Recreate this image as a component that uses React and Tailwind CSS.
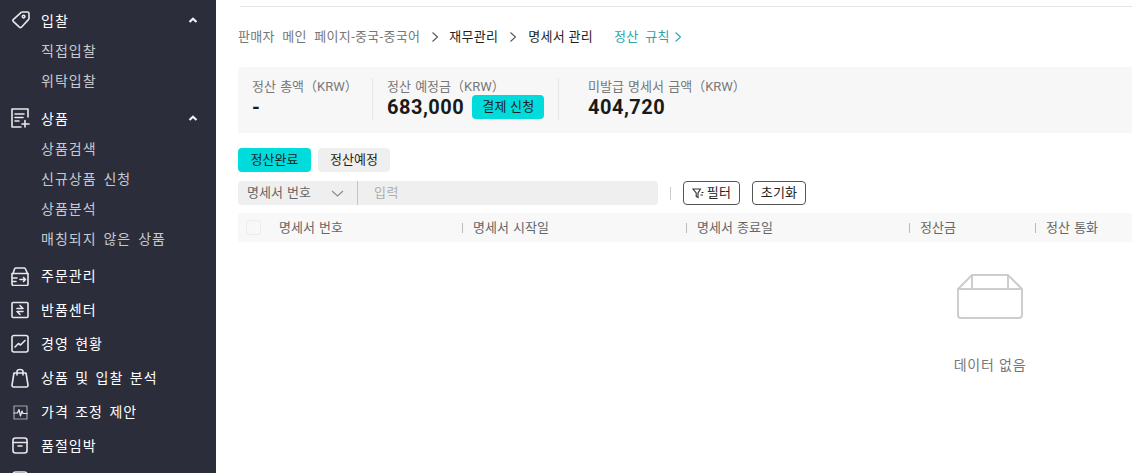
import React from 'react';

const font = { fontFamily: 'Roboto, "Noto Sans CJK KR", sans-serif' };

const svgProps = {
  width: 20,
  height: 20,
  viewBox: '0 0 20 20',
  fill: 'none',
  stroke: 'currentColor',
  strokeWidth: 1.6,
  strokeLinecap: 'round',
  strokeLinejoin: 'round',
};

const TagIcon = () => (
  <svg {...svgProps}>
    <path d="M3.2 9.6 11.2 2.4Q11.8 2 12.5 2H17.5Q19 2 19 3.5V8.2Q19 9 18.4 9.6L11.4 17.2Q10.4 18 9.4 17.2L3.2 11.4Q2.4 10.4 3.2 9.6Z" />
    <circle cx="13.6" cy="6.6" r="1.3" />
  </svg>
);
const DocPlusIcon = () => (
  <svg {...svgProps}>
    <path d="M18 9V1H2V19H11" />
    <path d="M5 6H14M5 9.5H13M5 13H9M15 12.5V19M12 16H19" />
  </svg>
);
const OrderIcon = () => (
  <svg {...svgProps}>
    <path d="M3 7.5 4.5 3Q5 2 6 2H14Q15 2 15.5 3L17.5 7.5" />
    <path d="M2 7.5H18V18Q18 19.5 16.5 19.5H3.5Q2 19.5 2 18Z" />
    <path d="M2.5 12H7M2.5 15.5H6M10 13.5H15.5M13.5 11.5 15.5 13.5 13.5 15.5" />
  </svg>
);
const ReturnIcon = () => (
  <svg {...svgProps}>
    <rect x="2" y="2.5" width="16" height="15" rx="1" />
    <path d="M7 8.5H13M10 5.5 13 8.5M13 11.5H7M10 14.5 7 11.5" />
  </svg>
);
const ChartIcon = () => (
  <svg {...svgProps}>
    <rect x="2" y="1.5" width="16" height="16.5" rx="2" />
    <path d="M5 13 8.5 9.5 10.5 11 15 6.5" />
  </svg>
);
const BagIcon = () => (
  <svg {...svgProps}>
    <path d="M4 5H16L18 17Q18 19 16.5 19H3.5Q2 19 2 17Z" />
    <path d="M7 7V3.5Q7 1.5 10 1.5T13 3.5V7" />
  </svg>
);
const PulseIcon = () => (
  <svg {...svgProps} strokeWidth={1.2}>
    <path d="M4 4H17V17H4Z" stroke="#a2a3ab" />
    <path d="M4 11H7.5L9 7.5 10.5 14 12 9 13 11.5H17" />
  </svg>
);
const ArchiveIcon = () => (
  <svg {...svgProps}>
    <rect x="3" y="2" width="14" height="15" rx="2.5" />
    <path d="M3 6.5H17M8 10H12" />
  </svg>
);
const ChevronUp = () => (
  <svg width="10" height="6" viewBox="0 0 10 6" fill="none" stroke="#f2f2f2" strokeWidth="2.2" strokeLinejoin="miter">
    <path d="M1.5 5 5 1.8 8.5 5" />
  </svg>
);
const ChevronRight = ({ className }) => (
  <svg width="8" height="12" viewBox="0 0 8 12" fill="none" stroke="currentColor" strokeWidth="1.1" className={className}>
    <path d="M1.5 1.5 6.5 6 1.5 10.5" />
  </svg>
);

function MenuGroup({ icon, title, items }) {
  return (
    <div className="mb-2">
      <MenuItem icon={icon} title={title} open />
      {items.map((item) => (
        <div key={item} className="h-[30px] flex items-center pt-[2px] pl-[41px] text-[14px] text-[#c8c9d0] tracking-[1px] [word-spacing:2.5px]">
          {item}
        </div>
      ))}
    </div>
  );
}

function MenuItem({ icon, title, open }) {
  return (
    <div className="h-[30px] flex items-center pl-[10px] text-white">
      <span className="w-[31px] text-[#e8e8ec] flex">{icon}</span>
      <span className={`text-[14px] tracking-[1px] [word-spacing:2px] ${open ? 'pt-[2px]' : ''}`}>{title}</span>
      {open && (
        <span className="ml-auto mr-[18px] flex">
          <ChevronUp />
        </span>
      )}
    </div>
  );
}

function Sidebar() {
  return (
    <aside className="w-[216px] shrink-0 bg-[#2c2d3b] pt-[5px] h-full overflow-hidden">
      <MenuGroup icon={<TagIcon />} title="입찰" items={['직접입찰', '위탁입찰']} />
      <MenuGroup icon={<DocPlusIcon />} title="상품" items={['상품검색', '신규상품 신청', '상품분석', '매칭되지 않은 상품']} />
      <div className="flex flex-col gap-1">
        <MenuItem icon={<OrderIcon />} title="주문관리" />
        <MenuItem icon={<ReturnIcon />} title="반품센터" />
        <MenuItem icon={<ChartIcon />} title="경영 현황" />
        <MenuItem icon={<BagIcon />} title="상품 및 입찰 분석" />
        <MenuItem icon={<PulseIcon />} title="가격 조정 제안" />
        <MenuItem icon={<ArchiveIcon />} title="품절임박" />
        <MenuItem icon={<ArchiveIcon />} title="" />
      </div>
    </aside>
  );
}

function Stat({ label, children, className }) {
  return (
    <div className={className}>
      <div className="text-[13px] leading-[18px] text-[#777] tracking-[0px] [word-spacing:1px]">{label}</div>
      <div className="flex items-center h-[24px] -mt-px text-[20px] font-bold text-[#1a1a1a] tracking-[0.5px]">{children}</div>
    </div>
  );
}

const columns = [
  { label: '명세서 번호', first: true },
  { label: '명세서 시작일' },
  { label: '명세서 종료일' },
  { label: '정산금' },
  { label: '정산 통화' },
];

export default function App() {
  return (
    <div className="w-[1132px] h-[473px] flex overflow-hidden bg-white" style={font}>
      <Sidebar />
      <main className="flex-1 min-w-0 overflow-hidden pl-[22px] text-[13px]">
        <div className="h-[7px] ml-[2px] border-b border-[#e5e5e5]" />
        <nav className="h-[60px] flex items-center tracking-[0.3px] text-[13px] text-[#1f1f1f]">
          <span className="text-[#777] [word-spacing:4px]">판매자 메인 페이지-중국-중국어</span>
          <ChevronRight className="ml-[11px] mr-[10px] text-[#555]" />
          <span>재무관리</span>
          <ChevronRight className="mx-[11px] text-[#555]" />
          <span>명세서 관리</span>
          <span className="ml-[21px] text-[#27a5ad] flex items-center gap-[4px] [word-spacing:3px]">
            정산 규칙
            <ChevronRight />
          </span>
        </nav>

        <section className="h-[66px] pb-[2px] bg-[#f7f7f7] rounded-tl-[4px] flex items-center pl-[14px]">
          <Stat label="정산 총액（KRW）" className="w-[120px] h-[42px]">-</Stat>
          <Stat label="정산 예정금（KRW）" className="w-[186px] h-[42px] pl-[14px] border-l border-[#e6e6e6]">
            683,000
            <button className="ml-[8px] w-[72px] h-[24px] rounded-[4px] bg-[#00dcdc] text-[13px] font-normal text-[#1f1f1f] tracking-[0.2px]">결제 신청</button>
          </Stat>
          <Stat label="미발급 명세서 금액（KRW）" className="h-[42px] pl-[29px] border-l border-[#e6e6e6]">404,720</Stat>
        </section>

        <div className="flex gap-[7px] mt-[15px]">
          <button className="w-[73px] h-[24px] rounded-[4px] bg-[#00dcdc] text-[13px] text-[#1f1f1f]">정산완료</button>
          <button className="w-[72px] h-[24px] rounded-[4px] bg-[#efefef] text-[13px] text-[#1f1f1f]">정산예정</button>
        </div>

        <div className="flex items-center mt-[9px] h-[24px]">
          <div className="w-[420px] h-full flex items-center bg-[#efefef] rounded-[4px]">
            <div className="w-[120px] h-full flex items-center justify-between pl-[9px] pr-[13px] border-r border-[#c4c4c4] text-[#666] [word-spacing:1px]">
              명세서 번호
              <svg width="13" height="7" viewBox="0 0 13 7" fill="none" stroke="#888" strokeWidth="1.1">
                <path d="M1 1 6.5 6 12 1" />
              </svg>
            </div>
            <span className="pl-[16px] text-[#b0b0b0] tracking-[0.6px]">입력</span>
          </div>
          <span className="ml-[12px] w-px h-[13px] bg-[#ccc]" />
          <button className="ml-[12px] w-[57px] h-full flex items-center justify-center gap-[3px] rounded-[4px] border border-[#555] text-[#222] tracking-[0.2px]">
            <svg width="12" height="12" viewBox="0 0 12 12" fill="none" stroke="#333" strokeWidth="1.1">
              <path d="M1 2H8.5L6 6V10.5L4.2 9.5V6ZM9.5 5.5H11.5M8.5 8H11" />
            </svg>
            필터
          </button>
          <button className="ml-[12px] w-[54px] h-full rounded-[4px] border border-[#555] text-[#222] tracking-[0.2px]">초기화</button>
        </div>

        <div className="mt-2 h-[29px] bg-[#f8f8f8] grid grid-cols-[224px_224px_223px_126px_1fr] items-center text-[#666] [word-spacing:1px]">
          {columns.map((col) =>
            col.first ? (
              <div key={col.label} className="flex items-center pl-[8px]">
                <span className="w-[15px] h-[15px] rounded-[3px] border border-[#ececec] bg-[#f8f8f8] mr-[18px]" />
                {col.label}
              </div>
            ) : (
              <div key={col.label} className="flex items-center">
                <span className="w-px h-[10px] bg-[#bbb] mr-[10px]" />
                {col.label}
              </div>
            )
          )}
        </div>

        {/* table runs past the window, so the empty state sits right of centre */}
        <div className="w-[1504px] flex flex-col items-center pt-[31px]">
          <svg width="66" height="46" viewBox="0 0 66 46" fill="none" stroke="#cdcdd0" strokeWidth="2" strokeLinejoin="round">
            <path d="M1 16H65V42Q65 45 62 45H4Q1 45 1 42Z" />
            <path d="M1 16 15 2H51L65 16M15 2V16M51 2V16" />
          </svg>
          <div className="mt-[36px] text-[14px] text-[#777] tracking-[0.8px]">데이터 없음</div>
        </div>
      </main>
    </div>
  );
}
